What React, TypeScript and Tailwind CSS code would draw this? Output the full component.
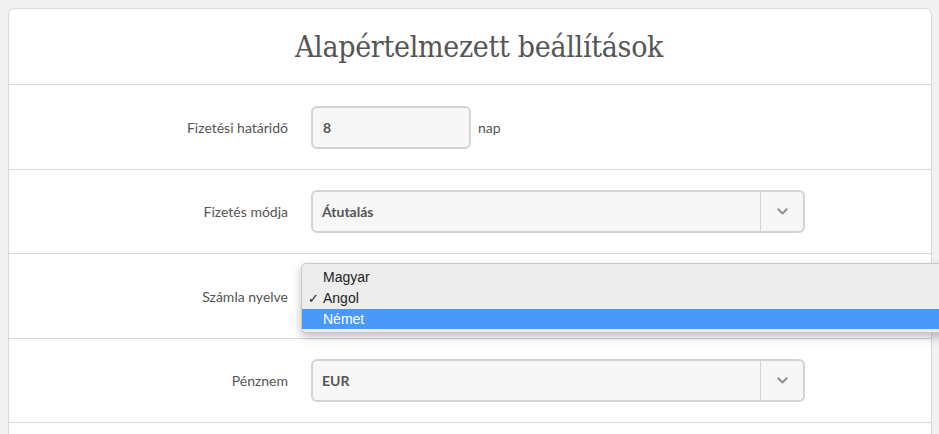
import React from "react";

const Chevron = () => (
  <svg width="11" height="7" viewBox="0 0 11 7" fill="none">
    <path d="M1.3 1.3 L5.5 5.5 L9.7 1.3" stroke="#8f8f8f" strokeWidth="2" strokeLinecap="round" strokeLinejoin="round" />
  </svg>
);

function Row({ label, children, h }: { label: string; children: React.ReactNode; h: string }) {
  return (
    <div className={`relative flex items-center border-b border-[#d6d6d6] ${h}`}>
      <div className="w-[279px] shrink-0 text-right text-[14px] text-[#555]">{label}</div>
      <div className="ml-[23px] flex items-center">{children}</div>
    </div>
  );
}

function Select({ value }: { value: string }) {
  return (
    <div className="flex h-[43px] w-[494px] items-stretch rounded-[6px] border-2 border-[#d3d3d3] bg-[#f7f7f7]">
      <div className="flex flex-1 items-center pl-[9px] text-[14px] font-bold text-[#555]">{value}</div>
      <div className="flex w-[43px] items-center justify-center border-l border-[#d3d3d3]">
        <Chevron />
      </div>
    </div>
  );
}

export default function App() {
  return (
    <div
      className="h-[434px] w-[939px] overflow-hidden bg-[#f1f1f1] pl-[8px] pt-[8px]"
      style={{ fontFamily: "Lato, 'Noto Sans', sans-serif" }}
    >
      <div className="w-[924px] rounded-t-[7px] border border-[#d9d9d9] bg-white">
        <div className="flex h-[76px] items-center justify-center border-b border-[#d6d6d6] pl-[18px]">
          <h1
            className="text-[30px] text-[#555]"
            style={{ fontFamily: "'DejaVu Serif Condensed', 'DejaVu Serif', serif", letterSpacing: "-0.3px" }}
          >
            Alapértelmezett beállítások
          </h1>
        </div>
        <Row label="Fizetési határidő" h="h-[85px]">
          <div className="flex h-[43px] w-[160px] items-center rounded-[6px] border-2 border-[#d3d3d3] bg-[#f7f7f7] pl-[10px] text-[14px] font-bold text-[#555]">
            8
          </div>
          <span className="ml-[7px] text-[14px] text-[#555]">nap</span>
        </Row>
        <Row label="Fizetés módja" h="h-[84px]">
          <Select value="Átutalás" />
        </Row>
        <Row label="Számla nyelve" h="h-[85px]">
          <div className="h-[43px] w-[494px]" />
          <div
            className="absolute left-[292px] top-[9px] w-[660px] rounded-[5px] border border-[#c8c8c8] bg-[#ededed] py-[3px] text-[14px] text-[#222] shadow-[0_4px_10px_rgba(0,0,0,0.25)]"
            style={{ fontFamily: "'Liberation Sans', Arial, sans-serif" }}
          >
            <div className="flex h-[21px] items-center pl-[21px]">Magyar</div>
            <div className="relative flex h-[21px] items-center pl-[21px]">
              <span className="absolute left-[6px] text-[13px]">✓</span>Angol
            </div>
            <div className="flex h-[20px] items-center bg-[#4a98f7] pl-[21px] text-white">Német</div>
          </div>
        </Row>
        <Row label="Pénznem" h="h-[84px]">
          <Select value="EUR" />
        </Row>
        <div className="h-[40px]" />
      </div>
    </div>
  );
}
